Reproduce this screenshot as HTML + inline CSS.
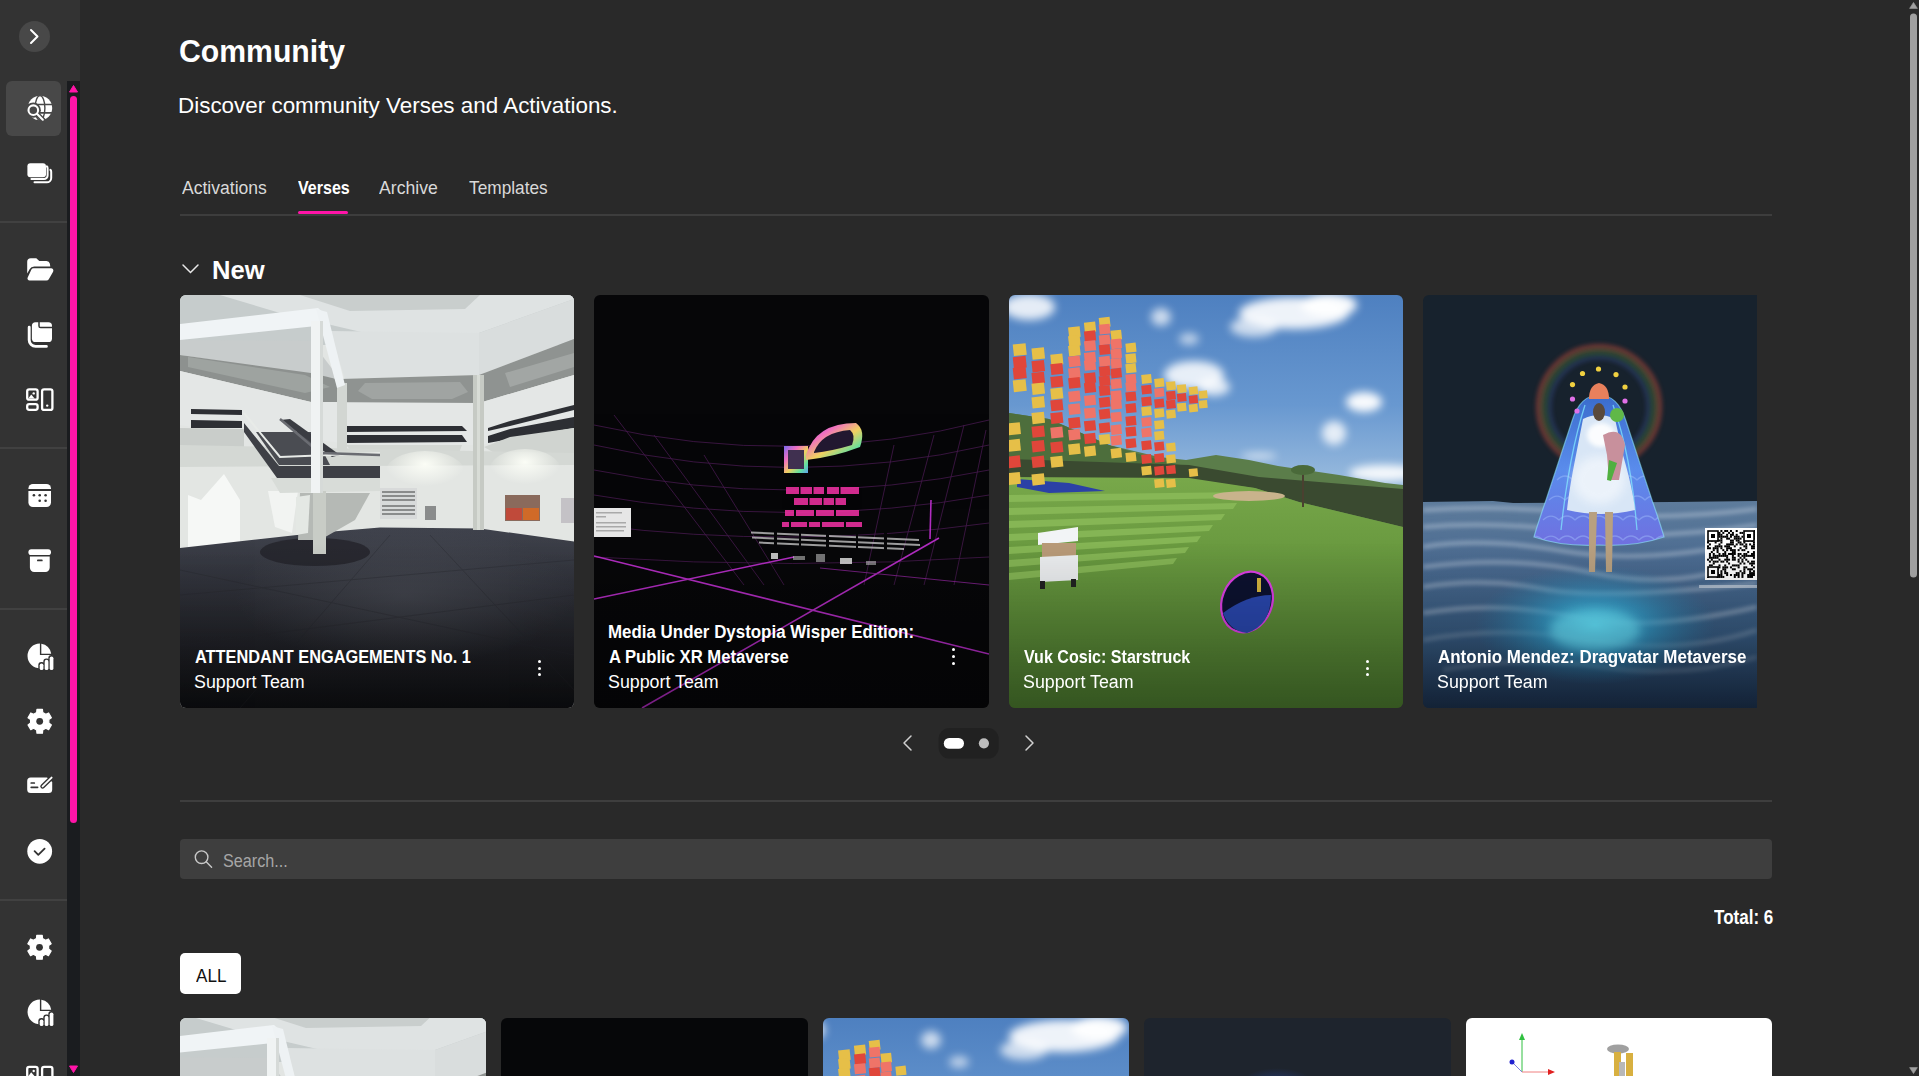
<!DOCTYPE html>
<html><head><meta charset="utf-8">
<style>
*{box-sizing:border-box;margin:0;padding:0}
html,body{width:1919px;height:1076px;overflow:hidden;background:#292929;font-family:"Liberation Sans",sans-serif;color:#fff}
.abs{position:absolute}
.tx{position:absolute;white-space:nowrap;line-height:normal;transform-origin:0 0;z-index:5}
#side{position:absolute;left:0;top:0;width:80px;height:1076px;background:#333}
#track{position:absolute;left:67px;top:81px;width:13px;height:995px;background:#1a1c1f}
.sep{position:absolute;left:0;width:67px;height:1px;background:#414141}
.card{position:absolute;top:295px;width:394px;height:413px;border-radius:6px;overflow:hidden}
.card svg{position:absolute;left:0;top:0}
.ov{position:absolute;left:0;top:0;width:100%;height:100%;background:linear-gradient(to bottom,rgba(0,0,0,0) 0%,rgba(0,0,0,0) 60%,rgba(0,0,0,0.15) 78%,rgba(0,0,0,0.32) 100%)}
.kebab{position:absolute;width:3px;height:17px;z-index:6}
.kebab i{display:block;width:3px;height:3px;border-radius:50%;background:#fff;margin-bottom:3.65px}
.gcard{position:absolute;top:1018px;width:306px;height:70px;border-radius:6px;overflow:hidden}
</style></head><body>
<div id="side">
  <div class="abs" style="left:19px;top:21px;width:31px;height:31px;border-radius:50%;background:#484848"></div>
  <svg class="abs" style="left:0;top:0" width="80" height="80"><path d="M31 30 L37.5 36.5 L31 43" fill="none" stroke="#fff" stroke-width="2" stroke-linecap="round" stroke-linejoin="round"/></svg>
  <div class="abs" style="left:6px;top:81px;width:55px;height:55px;border-radius:6px;background:#484848"></div>
  <div class="sep" style="top:221px;height:2px"></div>
  <div class="sep" style="top:447px;height:2px"></div>
  <div class="sep" style="top:608px;height:2px"></div>
  <div class="sep" style="top:899px;height:2px"></div>
  <div id="track">
    <svg class="abs" style="left:0;top:0" width="13" height="995">
      <path d="M2.5 11 L6.5 4.5 L10.5 11 Z" fill="#ff14a8" stroke="#ff14a8" stroke-width="1" stroke-linejoin="round"/>
      <rect x="3" y="15" width="7" height="727" rx="3.5" fill="#ff14a8"/>
      <path d="M2.5 985 L6.5 991.5 L10.5 985 Z" fill="#ff14a8" stroke="#ff14a8" stroke-width="1" stroke-linejoin="round"/>
    </svg>
  </div>
  <svg id="icons" class="abs" style="left:0;top:0" width="67" height="1076">
    <defs>
      <g id="ic-gear"><path d="M-3.03 -8.79 L-2.74 -11.89 L2.74 -11.89 L3.03 -8.79 L6.10 -7.02 L8.92 -8.32 L11.67 -3.57 L9.13 -1.77 L9.13 1.77 L11.67 3.57 L8.92 8.32 L6.10 7.02 L3.03 8.79 L2.74 11.89 L-2.74 11.89 L-3.03 8.79 L-6.10 7.02 L-8.92 8.32 L-11.67 3.57 L-9.13 1.77 L-9.13 -1.77 L-11.67 -3.57 L-8.92 -8.32 L-6.10 -7.02 Z" fill="#fff" stroke="#fff" stroke-width="1.2" stroke-linejoin="round"/><circle r="3.4" fill="#333"/></g>
      <g id="ic-pie">
        <path d="M39.9 643.6 V655.1 H52.3 A12.4 12.4 0 1 1 39.9 643.6 Z" fill="#fff"/>
        <path d="M41.3 643.7 A11.6 11.6 0 0 1 51.2 653.7 H41.3 Z" fill="#fff"/>
        <rect x="38.3" y="662.1" width="6.5" height="9.5" rx="3" fill="#333"/>
        <rect x="43.3" y="658.4" width="6.5" height="13.2" rx="3" fill="#333"/>
        <rect x="48.3" y="655" width="6.5" height="16.6" rx="3" fill="#333"/>
        <rect x="39.7" y="663.5" width="3.7" height="6.5" rx="1.85" fill="#fff"/>
        <rect x="44.7" y="659.8" width="3.7" height="10.2" rx="1.85" fill="#fff"/>
        <rect x="49.7" y="656.4" width="3.7" height="13.6" rx="1.85" fill="#fff"/>
      </g>
      <g id="ic-layout" fill="none" stroke="#fff" stroke-width="2.3">
        <rect x="27.2" y="389.3" width="10.4" height="10.4" rx="2"/>
        <rect x="27.2" y="404.1" width="10.4" height="5.7" rx="2"/>
        <rect x="42.1" y="389.3" width="10.3" height="20.6" rx="2"/>
        <path d="M28.3 398.6 L31.2 394.6 L34.6 398.6 Z" fill="#fff" stroke="none"/>
        <circle cx="33.7" cy="393.4" r="1.2" fill="#fff" stroke="none"/>
        <circle cx="47.2" cy="405.6" r="1.2" fill="#fff" stroke="none"/>
      </g>
    </defs>
    <!-- globe search -->
    <circle cx="40" cy="108" r="12.2" fill="#fff"/>
    <ellipse cx="40" cy="108" rx="4.9" ry="12.4" fill="none" stroke="#484848" stroke-width="1.4"/>
    <path d="M27 104.5 H53 M27 112.9 H53" stroke="#484848" stroke-width="1.6"/>
    <circle cx="33.3" cy="110.2" r="7.6" fill="#484848"/>
    <path d="M37.3 114.2 L43.5 120.4" stroke="#484848" stroke-width="5" stroke-linecap="round"/>
    <circle cx="33.3" cy="110.2" r="4.8" fill="none" stroke="#fff" stroke-width="2.1"/>
    <path d="M37.2 114.1 L42.8 119.7" stroke="#fff" stroke-width="2.1" stroke-linecap="round"/>
    <!-- chat stack -->
    <rect x="27.4" y="163.2" width="18.6" height="14.1" rx="3" fill="#fff"/>
    <path d="M31.4 179.1 H44 A3.6 3.6 0 0 0 47.6 175.5 V168.2 Q47.6 167 46.8 166.4" fill="none" stroke="#fff" stroke-width="2" stroke-linecap="round"/>
    <path d="M34.5 182.3 H46.8 A4.4 4.4 0 0 0 51.2 177.9 V171.7 Q51.2 170.5 50.4 169.9" fill="none" stroke="#fff" stroke-width="2" stroke-linecap="round"/>
    <!-- folder open -->
    <path d="M27.2 261.8 A3.6 3.6 0 0 1 30.8 258.2 H36.3 L39.3 260.9 H46.5 A3.4 3.4 0 0 1 49.8 263.6 L50.3 266.4 H34.2 A5.2 5.2 0 0 0 29.6 269.2 L27.2 273.5 Z" fill="#fff"/>
    <path d="M33.6 268.2 H51 A2.4 2.4 0 0 1 53.1 271.7 L48.8 279.2 A2.8 2.8 0 0 1 46.4 280.6 H29.6 A2.2 2.2 0 0 1 27.7 277.4 L31.4 269.5 A2.6 2.6 0 0 1 33.6 268.2 Z" fill="#fff"/>
    <!-- copy -->
    <path d="M29.2 327.3 V340 A6.4 6.4 0 0 0 35.6 346.4 H46.4" fill="none" stroke="#fff" stroke-width="2.9" stroke-linecap="round"/>
    <rect x="31.9" y="322.2" width="20.1" height="19.8" rx="3.6" fill="#fff"/>
    <path d="M39 322 V326 A1.6 1.6 0 0 0 40.6 327.6 H52.5" fill="none" stroke="#333" stroke-width="1.5"/>
    <!-- layout -->
    <use href="#ic-layout"/>
    <!-- calendar -->
    <path d="M28.4 489.1 V488.4 A4.5 4.5 0 0 1 32.9 483.9 H46.5 A4.5 4.5 0 0 1 51 488.4 V489.1 Z" fill="#fff"/>
    <path d="M28.4 491 H51 V502.5 A4.5 4.5 0 0 1 46.5 507 H32.9 A4.5 4.5 0 0 1 28.4 502.5 Z" fill="#fff"/>
    <g fill="#333"><circle cx="33.9" cy="495.3" r="1.3"/><circle cx="39.7" cy="495.3" r="1.3"/><circle cx="45.6" cy="495.3" r="1.3"/><circle cx="39.7" cy="500.7" r="1.3"/><circle cx="45.6" cy="500.7" r="1.3"/></g>
    <!-- archive -->
    <rect x="28.4" y="549.2" width="22.6" height="5.9" rx="2.9" fill="#fff"/>
    <path d="M29.9 556.6 H49.7 V567.6 A4.3 4.3 0 0 1 45.4 571.9 H34.2 A4.3 4.3 0 0 1 29.9 567.6 Z" fill="#fff"/>
    <rect x="37" y="559.5" width="5.7" height="1.8" rx="0.9" fill="#333"/>
    <!-- pie -->
    <use href="#ic-pie"/>
    <!-- gear -->
    <use href="#ic-gear" transform="translate(39.7 721.3)"/>
    <!-- ticket edit -->
    <path d="M30.7 777.5 H47 L52.2 782 V789.4 A3.5 3.5 0 0 1 48.7 792.9 H30.7 A3.5 3.5 0 0 1 27.2 789.4 V781 A3.5 3.5 0 0 1 30.7 777.5 Z" fill="#fff"/>
    <path d="M31.2 783 H34.3 M31.2 787.3 H37.6" stroke="#333" stroke-width="1.7" stroke-linecap="round"/>
    <path d="M42.6 786.4 L51.6 777.6" stroke="#333" stroke-width="4.6" stroke-linecap="round"/>
    <path d="M42.6 786.4 L51.6 777.6" stroke="#fff" stroke-width="1.9" stroke-linecap="round"/>
    <!-- check circle -->
    <circle cx="39.7" cy="851.3" r="12.4" fill="#fff"/>
    <path d="M34.6 851.2 L38.3 854.9 L44.6 848.6" fill="none" stroke="#333" stroke-width="1.8" stroke-linecap="round" stroke-linejoin="round"/>
    <!-- lower -->
    <use href="#ic-gear" transform="translate(39.5 947.3)"/>
    <use href="#ic-pie" transform="translate(0 356)"/>
    <use href="#ic-layout" transform="translate(0 677.6)"/>
  </svg>
</div>


<div class="abs" style="left:180px;top:214px;width:1592px;height:2px;background:#3d3d3d"></div>
<div class="abs" style="left:298px;top:211px;width:50px;height:3px;border-radius:2px;background:#ff14a8"></div>
<svg class="abs" style="left:180px;top:258px" width="24" height="24"><path d="M3 7 L10.5 14.5 L18 7" fill="none" stroke="#e8e8e8" stroke-width="1.5" stroke-linecap="round"/></svg>
<svg width="0" height="0" style="position:absolute">
<symbol id="im1" viewBox="0 0 394 413" preserveAspectRatio="none">
  <defs>
    <linearGradient id="fl1" x1="0" y1="0" x2="0" y2="1">
      <stop offset="0" stop-color="#3f424c"/><stop offset="0.35" stop-color="#30323a"/><stop offset="0.75" stop-color="#1c1d22"/><stop offset="1" stop-color="#0f1013"/>
    </linearGradient>
    <radialGradient id="flr1" cx="0.5" cy="0.5" r="0.5">
      <stop offset="0" stop-color="#50535c" stop-opacity="0.55"/><stop offset="1" stop-color="#50535c" stop-opacity="0"/>
    </radialGradient>
    <radialGradient id="spot1" cx="0.5" cy="0.3" r="0.5">
      <stop offset="0" stop-color="#fbfdf6" stop-opacity="1"/><stop offset="1" stop-color="#fbfdf6" stop-opacity="0"/>
    </radialGradient>
  </defs>
  <rect width="394" height="413" fill="#e2e5e3"/>
  <!-- top ceiling -->
  <rect width="394" height="50" fill="#c6cccc"/>
  <polygon points="40,0 394,0 394,4 299,38 194,40 100,18" fill="#dfe3e3"/>
  <polygon points="120,0 300,0 285,14 170,16" fill="#c9cecd"/>
  <!-- upper ring faces -->
  <polygon points="150,36 299,38 299,80 165,84" fill="#dde1e1"/>
  <polygon points="299,38 394,4 394,44 299,80" fill="#d9dddd"/>
  <polygon points="0,45 131,46 160,84 131,80 0,60" fill="#c8cccc"/>
  <!-- recesses -->
  <polygon points="0,60 131,78 165,86 165,107 131,107 0,76" fill="#8d918f"/>
  <polygon points="8,62 125,80 150,92 125,98 8,72" fill="#9ea3a0"/>
  <polygon points="160,84 299,80 299,108 165,108" fill="#8f9391"/>
  <polygon points="185,88 280,87 288,97 272,104 192,104 178,96" fill="#a0a4a2"/>
  <polygon points="299,80 394,44 394,80 299,108" fill="#8f9391"/>
  <polygon points="325,78 394,58 394,72 330,92" fill="#a2a6a4"/>
  <!-- upper walls -->
  <polygon points="0,76 131,107 299,108 394,80 394,135 299,150 194,150 60,140 0,130" fill="#e4e7e6"/>
  <!-- stripes -->
  <polygon points="11,114 62,115 62,120 11,119" fill="#2d2f34"/>
  <polygon points="11,125 62,126 62,133 11,133" fill="#2d2f34"/>
  <polygon points="166,131 282,131 287,136 166,137" fill="#2d2f34"/>
  <polygon points="166,140 282,140 287,147 166,148" fill="#2d2f34"/>
  <polygon points="308,133 330,126 394,110 394,115 330,131 308,136" fill="#2d2f34"/>
  <polygon points="308,141 330,134 394,122 394,133 330,144 308,148" fill="#2d2f34"/>
  <!-- ledges -->
  <polygon points="0,133 64,134 64,156 29,156 0,150" fill="#c9cdca"/>
  <polygon points="166,150 282,150 276,166 180,166" fill="#d2d6d2"/>
  <polygon points="304,152 330,142 394,133 394,160 325,164" fill="#d0d4d0"/>
  <polygon points="0,150 394,158 394,173 0,172" fill="#d4d8d4"/>
  <!-- lower walls -->
  <polygon points="0,172 394,170 394,248 300,234 200,232 135,238 0,253" fill="#e3e6e3"/>
  <ellipse cx="245" cy="178" rx="40" ry="22" fill="url(#spot1)"/>
  <ellipse cx="345" cy="176" rx="36" ry="22" fill="url(#spot1)"/>
  <polygon points="8,253 8,200 21,205 44,179 60,205 60,250" fill="#f6f8f6"/>
  <polygon points="88,196 118,196 112,238 95,232" fill="#f2f4f2"/>
  <!-- floor -->
  <polygon points="0,253 135,238 200,232.5 300,233.5 394,246.5 394,413 0,413" fill="url(#fl1)"/>
  <ellipse cx="225" cy="300" rx="170" ry="70" fill="url(#flr1)"/>
  <ellipse cx="135" cy="257" rx="55" ry="14" fill="#24252c" opacity="0.85"/>
  <g stroke="#25262c" stroke-width="1" opacity="0.35" fill="none">
    <path d="M0 300 L394 265"/><path d="M0 350 L394 300"/><path d="M60 413 L210 240"/><path d="M394 395 L250 240"/><path d="M0 275 L394 360"/>
  </g>
  <!-- right pillar -->
  <rect x="293" y="80" width="11" height="155" fill="#c6cac4"/>
  <rect x="297" y="80" width="3" height="155" fill="#d8dcd6"/>
  <!-- pillar center -->
  <rect x="157" y="88" width="10" height="68" fill="#d2d6d2"/>
  <!-- staircase -->
  <polygon points="64,128 99,171 200,171 200,183 97,183 64,137" fill="#3e4046"/>
  <polygon points="76,137 133,137 150,170 99,170" fill="#4a4c52"/>
  <polygon points="100,125 110,124 160,160 152,162" fill="#3a3c42"/>
  <path d="M64 118 L100 162 L200 158" stroke="#e8ebe8" stroke-width="2" fill="none"/>
  <path d="M100 124 L140 158 L200 160" stroke="#6a6c72" stroke-width="2.5" fill="none"/>
  <polygon points="91,183 200,183 200,196 100,198" fill="#d8dcd8"/>
  <polygon points="120,198 190,198 175,225 140,245 118,245" fill="#b5b9b5"/>
  <polygon points="116,202 130,200 128,238 116,240" fill="#e4e8e4"/>
  <rect x="133" y="196" width="13" height="63" fill="#c8ccc6"/>
  <!-- beam + pillar -->
  <polygon points="0,29 138,13 146,20 146,30 0,45" fill="#f0f4f6"/>
  <polygon points="136,14 147,17 165,90 157,93" fill="#eef2f4"/>
  <rect x="131" y="26" width="12" height="172" fill="#f0f3f3"/>
  <rect x="140" y="26" width="3" height="172" fill="#d6dad8"/>
  <!-- art -->
  <rect x="200" y="193" width="37" height="31" fill="#d8dada"/>
  <g fill="#6a6c6c" opacity="0.7"><rect x="202" y="196" width="33" height="2"/><rect x="202" y="200" width="33" height="2"/><rect x="202" y="204" width="33" height="2"/><rect x="202" y="210" width="33" height="2"/><rect x="202" y="214" width="33" height="2"/><rect x="202" y="218" width="33" height="2"/></g>
  <rect x="245" y="211" width="11" height="14" fill="#8a8c8c"/>
  <rect x="325" y="200" width="35" height="26" fill="#8a6a5c"/>
  <rect x="326" y="213" width="16" height="12" fill="#c04a3a"/>
  <rect x="343" y="213" width="16" height="12" fill="#d06a28"/>
  <rect x="381" y="203" width="13" height="25" fill="#c4c2c6"/>
</symbol>

<symbol id="im2" viewBox="0 0 395 413" preserveAspectRatio="none">
  <defs>
    <linearGradient id="rb2" x1="0" y1="0" x2="1" y2="1">
      <stop offset="0" stop-color="#7a6af0"/><stop offset="0.3" stop-color="#f070c0"/><stop offset="0.55" stop-color="#f0d060"/><stop offset="0.8" stop-color="#60e0a0"/><stop offset="1" stop-color="#60a0f0"/>
    </linearGradient>
  </defs>
  <rect width="395" height="413" fill="#060608"/>
  <g stroke="#7a2a86" stroke-width="0.8" fill="none" opacity="0.55">
    <path d="M0 130 Q200 175 395 125"/>
    <path d="M0 150 Q200 195 395 150"/>
    <path d="M0 175 Q200 215 395 175"/>
    <path d="M0 200 Q200 235 395 200"/>
    <path d="M0 230 Q200 255 395 228"/>
    <path d="M0 262 Q200 275 395 262"/>
    <path d="M20 120 L150 290"/><path d="M60 140 L170 290"/><path d="M110 160 L190 290"/>
    <path d="M300 150 L270 290"/><path d="M340 140 L300 290"/><path d="M370 130 L330 290"/><path d="M392 135 L360 290"/>
  </g>
  <g stroke="#b02cc0" stroke-width="1.6" fill="none">
    <path d="M0 261 L395 359"/>
    <path d="M48 413 L345 243"/>
    <path d="M0 304 L200 262"/>
    <path d="M337 205 L336 244"/>
  </g>
  <g stroke="#8a2496" stroke-width="1" fill="none" opacity="0.8">
    <path d="M226 273 L395 290"/>
  </g>
  <!-- logo -->
  <rect x="190" y="151" width="24" height="27" fill="url(#rb2)"/>
  <rect x="194" y="155" width="16" height="19" fill="#403050"/>
  <path d="M212 160 Q222 128 262 128 Q272 135 266 152 Q240 162 212 165 Z" fill="url(#rb2)"/>
  <path d="M220 157 Q228 137 256 135 Q262 140 258 150 Q238 156 220 158 Z" fill="#221830"/>
  <!-- magenta text -->
  <g fill="#e8309e" opacity="0.9">
    <rect x="192" y="192" width="73" height="7"/>
    <rect x="200" y="203" width="52" height="7"/>
    <rect x="191" y="215" width="74" height="6"/>
    <rect x="188" y="227" width="80" height="5"/>
  </g>
  <g fill="#060608">
    <rect x="205" y="192" width="1.5" height="7"/><rect x="218" y="192" width="1.5" height="7"/><rect x="230" y="192" width="3" height="7"/><rect x="245" y="192" width="1.5" height="7"/>
    <rect x="214" y="203" width="1.5" height="7"/><rect x="228" y="203" width="1.5" height="7"/><rect x="240" y="203" width="1.5" height="7"/>
    <rect x="200" y="215" width="2" height="6"/><rect x="220" y="215" width="2" height="6"/><rect x="240" y="215" width="2" height="6"/>
    <rect x="195" y="227" width="2" height="5"/><rect x="213" y="227" width="2" height="5"/><rect x="226" y="227" width="2" height="5"/><rect x="250" y="227" width="2" height="5"/>
  </g>
  <!-- white small text -->
  <g fill="#cfcfcf" opacity="0.75">
    <polygon points="157,236.5 325,244 325,246 157,238.5"/>
    <polygon points="158,241.5 326,249 326,251 158,243.5"/>
    <polygon points="165,246.5 310,253 310,255 165,248.5"/>
  </g>
  <g fill="#060608">
    <rect x="180" y="235" width="3" height="22"/><rect x="205" y="235" width="2" height="22"/><rect x="232" y="235" width="3" height="22"/><rect x="262" y="235" width="2" height="22"/><rect x="290" y="235" width="3" height="22"/>
  </g>
  <g fill="#e0e0e0" opacity="0.85">
    <rect x="177" y="258" width="7" height="6"/><rect x="199" y="261" width="12" height="4" opacity="0.6"/><rect x="222" y="259" width="9" height="8" opacity="0.6"/><rect x="246" y="263" width="12" height="6"/><rect x="272" y="266" width="10" height="4" opacity="0.6"/>
  </g>
  <!-- sign left -->
  <rect x="0" y="213" width="37" height="29" fill="#e6e6e6"/>
  <g fill="#909090" opacity="0.7"><rect x="2" y="217" width="26" height="1.5"/><rect x="2" y="221" width="10" height="1.5"/><rect x="2" y="227" width="30" height="1.5"/><rect x="2" y="231" width="30" height="1.5"/><rect x="2" y="235" width="28" height="1.5"/></g>
</symbol>

<symbol id="im3" viewBox="0 0 394 413" preserveAspectRatio="none">
  <defs>
    <linearGradient id="sky3" x1="0" y1="0" x2="0" y2="1">
      <stop offset="0" stop-color="#4e80c0"/><stop offset="0.55" stop-color="#6898d0"/><stop offset="1" stop-color="#a0c0e0"/>
    </linearGradient>
    <linearGradient id="gr3" x1="0" y1="0" x2="0" y2="1">
      <stop offset="0" stop-color="#78a84a"/><stop offset="0.3" stop-color="#6a9a40"/><stop offset="1" stop-color="#4e7e30"/>
    </linearGradient>
    <filter id="bl3" x="-30%" y="-30%" width="160%" height="160%"><feGaussianBlur stdDeviation="4"/></filter>
    <filter id="bl3b"><feGaussianBlur stdDeviation="1.2"/></filter>
  </defs>
  <rect width="394" height="200" fill="url(#sky3)"/>
  <g fill="#fff" filter="url(#bl3)">
    <ellipse cx="285" cy="18" rx="55" ry="16" opacity="0.9"/>
    <ellipse cx="320" cy="10" rx="28" ry="12" opacity="0.95"/>
    <ellipse cx="245" cy="32" rx="24" ry="10" opacity="0.7"/>
    <ellipse cx="185" cy="80" rx="30" ry="14" opacity="0.85"/>
    <ellipse cx="205" cy="92" rx="16" ry="9" opacity="0.8"/>
    <ellipse cx="152" cy="22" rx="10" ry="9" opacity="0.7"/>
    <ellipse cx="180" cy="44" rx="10" ry="6" opacity="0.6"/>
    <ellipse cx="355" cy="107" rx="18" ry="10" opacity="0.95"/>
    <ellipse cx="325" cy="138" rx="12" ry="12" opacity="0.8"/>
    <ellipse cx="20" cy="12" rx="26" ry="13" opacity="0.85"/>
    <ellipse cx="375" cy="178" rx="35" ry="8" opacity="0.9"/>
    <ellipse cx="250" cy="161" rx="18" ry="3" opacity="0.7"/>
  </g>
  <!-- hills -->
  <polygon points="0,118 40,124 100,150 150,162 177,165 207,160 240,165 269,171 330,180 376,188 394,190 394,232 0,232" fill="#5b7d4a"/>
  <polygon points="0,118 40,124 100,150 150,165 180,172 180,190 0,190" fill="#4d6e3c"/>
  <polygon points="0,164 180,170 250,182 394,194 394,232 290,207 246,193 180,185 0,184" fill="#3a4a30"/>
  <!-- grass -->
  <polygon points="0,182 180,183 246,193 290,207 394,232 394,413 0,413" fill="url(#gr3)"/>
  <g fill="#8cbc5a" opacity="0.8">
<polygon points="0,200 240,197 236,203 0,207"/>
<polygon points="0,213 228,208 224,214 0,220"/>
<polygon points="0,226 216,219 212,225 0,233"/>
<polygon points="0,239 204,230 200,236 0,246"/>
<polygon points="0,252 192,241 188,247 0,259"/>
<polygon points="0,265 180,252 176,258 0,272"/>
<polygon points="0,278 168,263 164,269 0,285"/>
</g>
  <polygon points="8,184 60,188 96,196 40,198 8,192" fill="#2b41a6"/>
  <ellipse cx="240" cy="201" rx="36" ry="5" fill="#c9b38c"/>
  <!-- palm -->
  <rect x="293" y="175" width="2" height="37" fill="#4a4030"/>
  <ellipse cx="294" cy="175" rx="12" ry="5" fill="#4a6a3a"/>
  <!-- squares -->
  <g>
<rect x="4.3" y="48.8" width="12.9" height="11.6" fill="#e6bf48" transform="rotate(-6 10.7 54.6)"/>
<rect x="4.3" y="61.5" width="12.9" height="11.6" fill="#e0463a" transform="rotate(-6 10.7 67.3)"/>
<rect x="4.3" y="72.2" width="12.9" height="11.6" fill="#e0463a" transform="rotate(-6 10.7 78.1)"/>
<rect x="4.3" y="84.9" width="12.9" height="11.6" fill="#e6bf48" transform="rotate(-6 10.7 90.7)"/>
<rect x="-1.7" y="127.8" width="13.1" height="11.8" fill="#e6bf48" transform="rotate(-6 4.9 133.7)"/>
<rect x="-1.7" y="144.4" width="13.1" height="11.8" fill="#e6bf48" transform="rotate(-6 4.9 150.3)"/>
<rect x="-1.7" y="161.0" width="13.1" height="11.8" fill="#e0463a" transform="rotate(-6 4.9 166.9)"/>
<rect x="-1.7" y="177.6" width="13.1" height="11.8" fill="#e6bf48" transform="rotate(-6 4.9 183.5)"/>
<rect x="23.0" y="52.9" width="12.5" height="11.2" fill="#e6bf48" transform="rotate(-6 29.3 58.5)"/>
<rect x="23.0" y="65.6" width="12.5" height="11.2" fill="#e0463a" transform="rotate(-6 29.3 71.2)"/>
<rect x="23.0" y="77.3" width="12.5" height="11.2" fill="#e0463a" transform="rotate(-6 29.3 82.9)"/>
<rect x="23.0" y="88.1" width="12.5" height="11.2" fill="#e6bf48" transform="rotate(-6 29.3 93.7)"/>
<rect x="23.0" y="101.7" width="12.5" height="11.2" fill="#e6bf48" transform="rotate(-6 29.3 107.3)"/>
<rect x="23.0" y="117.3" width="12.5" height="11.2" fill="#e6bf48" transform="rotate(-6 29.3 123.0)"/>
<rect x="23.0" y="131.0" width="12.5" height="11.2" fill="#e0463a" transform="rotate(-6 29.3 136.6)"/>
<rect x="23.0" y="145.6" width="12.5" height="11.2" fill="#e0463a" transform="rotate(-6 29.3 151.2)"/>
<rect x="23.0" y="161.2" width="12.5" height="11.2" fill="#e0463a" transform="rotate(-6 29.3 166.9)"/>
<rect x="23.0" y="178.8" width="12.5" height="11.2" fill="#e6bf48" transform="rotate(-6 29.3 184.4)"/>
<rect x="41.8" y="59.0" width="12.1" height="10.8" fill="#e6bf48" transform="rotate(-6 47.8 64.4)"/>
<rect x="41.8" y="68.7" width="12.1" height="10.8" fill="#e0463a" transform="rotate(-6 47.8 74.2)"/>
<rect x="41.8" y="81.4" width="12.1" height="10.8" fill="#e0463a" transform="rotate(-6 47.8 86.8)"/>
<rect x="41.8" y="93.1" width="12.1" height="10.8" fill="#e6bf48" transform="rotate(-6 47.8 98.6)"/>
<rect x="41.8" y="104.8" width="12.1" height="10.8" fill="#e0463a" transform="rotate(-6 47.8 110.3)"/>
<rect x="41.8" y="117.5" width="12.1" height="10.8" fill="#e0463a" transform="rotate(-6 47.8 123.0)"/>
<rect x="41.8" y="132.2" width="12.1" height="10.8" fill="#ef7468" transform="rotate(-6 47.8 137.6)"/>
<rect x="41.8" y="146.8" width="12.1" height="10.8" fill="#e0463a" transform="rotate(-6 47.8 152.2)"/>
<rect x="41.8" y="161.4" width="12.1" height="10.8" fill="#e6bf48" transform="rotate(-6 47.8 166.9)"/>
<rect x="59.6" y="31.8" width="11.6" height="10.5" fill="#e6bf48" transform="rotate(-6 65.4 37.1)"/>
<rect x="59.6" y="40.6" width="11.6" height="10.5" fill="#e6bf48" transform="rotate(-6 65.4 45.9)"/>
<rect x="59.6" y="50.4" width="11.6" height="10.5" fill="#e6bf48" transform="rotate(-6 65.4 55.6)"/>
<rect x="59.6" y="61.1" width="11.6" height="10.5" fill="#ef7468" transform="rotate(-6 65.4 66.4)"/>
<rect x="59.6" y="72.8" width="11.6" height="10.5" fill="#ef7468" transform="rotate(-6 65.4 78.1)"/>
<rect x="59.6" y="82.6" width="11.6" height="10.5" fill="#e0463a" transform="rotate(-6 65.4 87.8)"/>
<rect x="59.6" y="96.2" width="11.6" height="10.5" fill="#ef7468" transform="rotate(-6 65.4 101.5)"/>
<rect x="59.6" y="108.9" width="11.6" height="10.5" fill="#ef7468" transform="rotate(-6 65.4 114.2)"/>
<rect x="59.6" y="122.6" width="11.6" height="10.5" fill="#e0463a" transform="rotate(-6 65.4 127.8)"/>
<rect x="59.6" y="134.3" width="11.6" height="10.5" fill="#ef7468" transform="rotate(-6 65.4 139.5)"/>
<rect x="59.6" y="148.9" width="11.6" height="10.5" fill="#e6bf48" transform="rotate(-6 65.4 154.2)"/>
<rect x="75.4" y="27.1" width="11.3" height="10.1" fill="#e6bf48" transform="rotate(-6 81.0 32.2)"/>
<rect x="75.4" y="35.9" width="11.3" height="10.1" fill="#e0463a" transform="rotate(-6 81.0 41.0)"/>
<rect x="75.4" y="45.7" width="11.3" height="10.1" fill="#ef7468" transform="rotate(-6 81.0 50.7)"/>
<rect x="75.4" y="57.4" width="11.3" height="10.1" fill="#ef7468" transform="rotate(-6 81.0 62.5)"/>
<rect x="75.4" y="65.2" width="11.3" height="10.1" fill="#ef7468" transform="rotate(-6 81.0 70.3)"/>
<rect x="75.4" y="77.9" width="11.3" height="10.1" fill="#e0463a" transform="rotate(-6 81.0 82.9)"/>
<rect x="75.4" y="87.6" width="11.3" height="10.1" fill="#e0463a" transform="rotate(-6 81.0 92.7)"/>
<rect x="75.4" y="100.3" width="11.3" height="10.1" fill="#ef7468" transform="rotate(-6 81.0 105.4)"/>
<rect x="75.4" y="113.0" width="11.3" height="10.1" fill="#ef7468" transform="rotate(-6 81.0 118.1)"/>
<rect x="75.4" y="125.7" width="11.3" height="10.1" fill="#e0463a" transform="rotate(-6 81.0 130.8)"/>
<rect x="75.4" y="138.4" width="11.3" height="10.1" fill="#e0463a" transform="rotate(-6 81.0 143.4)"/>
<rect x="75.4" y="151.1" width="11.3" height="10.1" fill="#e6bf48" transform="rotate(-6 81.0 156.1)"/>
<rect x="90.2" y="22.4" width="10.9" height="9.8" fill="#e6bf48" transform="rotate(-6 95.6 27.3)"/>
<rect x="90.2" y="29.2" width="10.9" height="9.8" fill="#ef7468" transform="rotate(-6 95.6 34.2)"/>
<rect x="90.2" y="40.0" width="10.9" height="9.8" fill="#ef7468" transform="rotate(-6 95.6 44.9)"/>
<rect x="90.2" y="49.7" width="10.9" height="9.8" fill="#e0463a" transform="rotate(-6 95.6 54.6)"/>
<rect x="90.2" y="61.4" width="10.9" height="9.8" fill="#ef7468" transform="rotate(-6 95.6 66.4)"/>
<rect x="90.2" y="71.2" width="10.9" height="9.8" fill="#e0463a" transform="rotate(-6 95.6 76.1)"/>
<rect x="90.2" y="81.0" width="10.9" height="9.8" fill="#e0463a" transform="rotate(-6 95.6 85.9)"/>
<rect x="90.2" y="90.7" width="10.9" height="9.8" fill="#e0463a" transform="rotate(-6 95.6 95.6)"/>
<rect x="90.2" y="102.4" width="10.9" height="9.8" fill="#e0463a" transform="rotate(-6 95.6 107.3)"/>
<rect x="90.2" y="114.1" width="10.9" height="9.8" fill="#e0463a" transform="rotate(-6 95.6 119.0)"/>
<rect x="90.2" y="127.8" width="10.9" height="9.8" fill="#e0463a" transform="rotate(-6 95.6 132.7)"/>
<rect x="90.2" y="139.5" width="10.9" height="9.8" fill="#e6bf48" transform="rotate(-6 95.6 144.4)"/>
<rect x="102.0" y="35.2" width="10.6" height="9.6" fill="#e6bf48" transform="rotate(-6 107.3 40.0)"/>
<rect x="102.0" y="44.0" width="10.6" height="9.6" fill="#ef7468" transform="rotate(-6 107.3 48.8)"/>
<rect x="102.0" y="53.8" width="10.6" height="9.6" fill="#ef7468" transform="rotate(-6 107.3 58.5)"/>
<rect x="102.0" y="63.5" width="10.6" height="9.6" fill="#ef7468" transform="rotate(-6 107.3 68.3)"/>
<rect x="102.0" y="73.3" width="10.6" height="9.6" fill="#e0463a" transform="rotate(-6 107.3 78.1)"/>
<rect x="102.0" y="84.0" width="10.6" height="9.6" fill="#ef7468" transform="rotate(-6 107.3 88.8)"/>
<rect x="102.0" y="95.7" width="10.6" height="9.6" fill="#ef7468" transform="rotate(-6 107.3 100.5)"/>
<rect x="102.0" y="104.5" width="10.6" height="9.6" fill="#ef7468" transform="rotate(-6 107.3 109.3)"/>
<rect x="102.0" y="117.2" width="10.6" height="9.6" fill="#ef7468" transform="rotate(-6 107.3 122.0)"/>
<rect x="102.0" y="129.9" width="10.6" height="9.6" fill="#ef7468" transform="rotate(-6 107.3 134.7)"/>
<rect x="102.0" y="140.6" width="10.6" height="9.6" fill="#ef7468" transform="rotate(-6 107.3 145.4)"/>
<rect x="102.0" y="153.3" width="10.6" height="9.6" fill="#e6bf48" transform="rotate(-6 107.3 158.1)"/>
<rect x="116.8" y="48.1" width="10.3" height="9.2" fill="#e6bf48" transform="rotate(-6 122.0 52.7)"/>
<rect x="116.8" y="58.8" width="10.3" height="9.2" fill="#e6bf48" transform="rotate(-6 122.0 63.4)"/>
<rect x="116.8" y="68.6" width="10.3" height="9.2" fill="#e6bf48" transform="rotate(-6 122.0 73.2)"/>
<rect x="116.8" y="79.3" width="10.3" height="9.2" fill="#ef7468" transform="rotate(-6 122.0 83.9)"/>
<rect x="116.8" y="87.1" width="10.3" height="9.2" fill="#ef7468" transform="rotate(-6 122.0 91.7)"/>
<rect x="116.8" y="96.9" width="10.3" height="9.2" fill="#e0463a" transform="rotate(-6 122.0 101.5)"/>
<rect x="116.8" y="108.6" width="10.3" height="9.2" fill="#e0463a" transform="rotate(-6 122.0 113.2)"/>
<rect x="116.8" y="121.3" width="10.3" height="9.2" fill="#e0463a" transform="rotate(-6 122.0 125.9)"/>
<rect x="116.8" y="132.0" width="10.3" height="9.2" fill="#e0463a" transform="rotate(-6 122.0 136.6)"/>
<rect x="116.8" y="143.7" width="10.3" height="9.2" fill="#e0463a" transform="rotate(-6 122.0 148.3)"/>
<rect x="116.8" y="157.4" width="10.3" height="9.2" fill="#e6bf48" transform="rotate(-6 122.0 162.0)"/>
<rect x="132.6" y="79.5" width="9.9" height="8.9" fill="#e6bf48" transform="rotate(-6 137.6 83.9)"/>
<rect x="132.6" y="90.2" width="9.9" height="8.9" fill="#e0463a" transform="rotate(-6 137.6 94.7)"/>
<rect x="132.6" y="101.9" width="9.9" height="8.9" fill="#e0463a" transform="rotate(-6 137.6 106.4)"/>
<rect x="132.6" y="111.7" width="9.9" height="8.9" fill="#e6bf48" transform="rotate(-6 137.6 116.1)"/>
<rect x="132.6" y="122.4" width="9.9" height="8.9" fill="#ef7468" transform="rotate(-6 137.6 126.9)"/>
<rect x="132.6" y="133.1" width="9.9" height="8.9" fill="#ef7468" transform="rotate(-6 137.6 137.6)"/>
<rect x="132.6" y="145.8" width="9.9" height="8.9" fill="#e0463a" transform="rotate(-6 137.6 150.3)"/>
<rect x="132.6" y="159.5" width="9.9" height="8.9" fill="#e0463a" transform="rotate(-6 137.6 163.9)"/>
<rect x="132.6" y="171.2" width="9.9" height="8.9" fill="#e6bf48" transform="rotate(-6 137.6 175.6)"/>
<rect x="145.5" y="83.5" width="9.6" height="8.6" fill="#e6bf48" transform="rotate(-6 150.3 87.8)"/>
<rect x="145.5" y="93.3" width="9.6" height="8.6" fill="#ef7468" transform="rotate(-6 150.3 97.6)"/>
<rect x="145.5" y="104.0" width="9.6" height="8.6" fill="#e0463a" transform="rotate(-6 150.3 108.3)"/>
<rect x="145.5" y="113.8" width="9.6" height="8.6" fill="#e6bf48" transform="rotate(-6 150.3 118.1)"/>
<rect x="145.5" y="125.5" width="9.6" height="8.6" fill="#e6bf48" transform="rotate(-6 150.3 129.8)"/>
<rect x="145.5" y="136.2" width="9.6" height="8.6" fill="#e6bf48" transform="rotate(-6 150.3 140.5)"/>
<rect x="145.5" y="146.9" width="9.6" height="8.6" fill="#e0463a" transform="rotate(-6 150.3 151.2)"/>
<rect x="145.5" y="158.6" width="9.6" height="8.6" fill="#e0463a" transform="rotate(-6 150.3 163.0)"/>
<rect x="145.5" y="171.3" width="9.6" height="8.6" fill="#e0463a" transform="rotate(-6 150.3 175.6)"/>
<rect x="145.5" y="184.0" width="9.6" height="8.6" fill="#e6bf48" transform="rotate(-6 150.3 188.3)"/>
<rect x="157.3" y="86.6" width="9.3" height="8.4" fill="#e6bf48" transform="rotate(-6 162.0 90.7)"/>
<rect x="157.3" y="96.3" width="9.3" height="8.4" fill="#e0463a" transform="rotate(-6 162.0 100.5)"/>
<rect x="157.3" y="105.1" width="9.3" height="8.4" fill="#e0463a" transform="rotate(-6 162.0 109.3)"/>
<rect x="157.3" y="114.9" width="9.3" height="8.4" fill="#e6bf48" transform="rotate(-6 162.0 119.0)"/>
<rect x="157.3" y="148.0" width="9.3" height="8.4" fill="#e6bf48" transform="rotate(-6 162.0 152.2)"/>
<rect x="157.3" y="159.7" width="9.3" height="8.4" fill="#e6bf48" transform="rotate(-6 162.0 163.9)"/>
<rect x="157.3" y="170.5" width="9.3" height="8.4" fill="#e0463a" transform="rotate(-6 162.0 174.7)"/>
<rect x="157.3" y="184.1" width="9.3" height="8.4" fill="#e6bf48" transform="rotate(-6 162.0 188.3)"/>
<rect x="168.2" y="89.6" width="9.1" height="8.1" fill="#e6bf48" transform="rotate(-6 172.7 93.7)"/>
<rect x="168.2" y="98.4" width="9.1" height="8.1" fill="#e0463a" transform="rotate(-6 172.7 102.5)"/>
<rect x="168.2" y="108.1" width="9.1" height="8.1" fill="#e6bf48" transform="rotate(-6 172.7 112.2)"/>
<rect x="180.0" y="91.7" width="8.8" height="7.9" fill="#e6bf48" transform="rotate(-6 184.4 95.6)"/>
<rect x="180.0" y="100.5" width="8.8" height="7.9" fill="#e0463a" transform="rotate(-6 184.4 104.4)"/>
<rect x="180.0" y="109.2" width="8.8" height="7.9" fill="#e6bf48" transform="rotate(-6 184.4 113.2)"/>
<rect x="180.0" y="173.6" width="8.8" height="7.9" fill="#e6bf48" transform="rotate(-6 184.4 177.6)"/>
<rect x="189.9" y="95.7" width="8.5" height="7.7" fill="#e6bf48" transform="rotate(-6 194.2 99.5)"/>
<rect x="189.9" y="105.4" width="8.5" height="7.7" fill="#e6bf48" transform="rotate(-6 194.2 109.3)"/>
  </g>
  <!-- golf cart -->
  <polygon points="29,238 69,232 69,246 29,250" fill="#f2f4f6"/>
  <rect x="33" y="248" width="34" height="16" fill="#b89a78"/>
  <polygon points="31,262 69,260 69,285 31,287" fill="#eceef0"/>
  <rect x="31" y="286" width="5" height="8" fill="#222"/><rect x="62" y="284" width="5" height="8" fill="#222"/>
  <!-- portal -->
  <ellipse cx="238" cy="307" rx="25" ry="31" transform="rotate(22 238 307)" fill="#0d1230" stroke="#e040e8" stroke-width="2.2"/>
  <path d="M214 318 Q238 300 262 300 Q262 330 238 338 Q220 336 214 318 Z" fill="#2a48b0"/>
  <rect x="248" y="283" width="4" height="14" fill="#d8b840"/>
  <!-- bottom dark -->
  
</symbol>
<symbol id="im4" viewBox="0 0 334 413" preserveAspectRatio="none">
  <defs>
    <linearGradient id="cl4" x1="0" y1="0" x2="0" y2="1">
      <stop offset="0" stop-color="#5e7c9c"/><stop offset="0.3" stop-color="#4a6a90"/><stop offset="0.65" stop-color="#365a80"/><stop offset="1" stop-color="#1c3250"/>
    </linearGradient>
    <radialGradient id="glow4" cx="0.5" cy="0.5" r="0.5">
      <stop offset="0" stop-color="#50e0ff" stop-opacity="1"/><stop offset="0.45" stop-color="#30b0e0" stop-opacity="0.6"/><stop offset="1" stop-color="#2080b0" stop-opacity="0"/>
    </radialGradient>
    <linearGradient id="cape4" x1="0" y1="0" x2="0" y2="1">
      <stop offset="0" stop-color="#3a6ccc"/><stop offset="0.5" stop-color="#5a8cec"/><stop offset="1" stop-color="#7070e0"/>
    </linearGradient>
    <clipPath id="capeclip"><path d="M176 100 Q157 100 149 126 Q136 166 123 205 Q113 234 111 242 Q140 252 176 250 Q212 252 241 242 Q239 234 229 205 Q216 166 203 126 Q195 100 176 100 Z"/></clipPath>
    <filter id="bl4"><feGaussianBlur stdDeviation="2"/></filter>
    <filter id="bl4b" x="-20%" y="-20%" width="140%" height="140%"><feGaussianBlur stdDeviation="5"/></filter>
  </defs>
  <rect width="334" height="413" fill="#17222d"/>
  <polygon points="0,207 70,206 90,208 250,207 334,206 334,413 0,413" fill="url(#cl4)"/>
  <g stroke="#c4d0e0" stroke-width="4" opacity="0.5" filter="url(#bl4)" fill="none">
    <path d="M0 215 Q80 210 160 218 T334 214"/>
    <path d="M0 232 Q70 226 150 236 T334 230"/>
    <path d="M0 252 Q60 242 140 256 T334 246"/>
    <path d="M0 272 Q90 260 170 278 T334 266"/>
    <path d="M0 292 Q60 282 120 294 T334 288"/>
    <path d="M0 318 Q80 306 150 322 T334 312"/>
    <path d="M0 345 Q80 330 170 345 T334 335" opacity="0.6"/>
    <path d="M20 375 Q100 360 180 372 T334 362" opacity="0.5"/>
  </g>
  <ellipse cx="172" cy="330" rx="120" ry="60" fill="url(#glow4)"/>
  <ellipse cx="172" cy="335" rx="45" ry="20" fill="#70e8ff" opacity="0.6" filter="url(#bl4b)"/>
  <!-- halo -->
  <circle cx="176" cy="112" r="61" fill="none" stroke="#c04a3a" stroke-width="4" opacity="0.55" filter="url(#bl4)"/>
  <circle cx="176" cy="112" r="57" fill="none" stroke="#c0a040" stroke-width="3" opacity="0.4" filter="url(#bl4)"/>
  <circle cx="176" cy="112" r="53" fill="none" stroke="#4a9a50" stroke-width="3" opacity="0.4" filter="url(#bl4)"/>
  <circle cx="176" cy="112" r="49" fill="none" stroke="#4a60c0" stroke-width="3" opacity="0.35" filter="url(#bl4)"/>
  <!-- cape -->
  <path d="M176 100 Q157 100 149 126 Q136 166 123 205 Q113 234 111 242 Q140 252 176 250 Q212 252 241 242 Q239 234 229 205 Q216 166 203 126 Q195 100 176 100 Z" fill="url(#cape4)"/>
  <path d="M176 100 Q157 100 149 126 Q136 166 123 205 Q113 234 111 242 Q140 252 176 250 Q212 252 241 242 Q239 234 229 205 Q216 166 203 126 Q195 100 176 100 Z" fill="none" stroke="#90f0ff" stroke-width="1.2" opacity="0.55"/>
  <path d="M162 110 Q146 160 138 235 M190 110 Q208 160 214 235" stroke="#80e8ff" stroke-width="1.3" fill="none" opacity="0.75"/>
  <g fill="none" stroke="#a8c8ff" stroke-width="1.2" opacity="0.4" clip-path="url(#capeclip)">
    <path d="M120 225 q8 -8 16 0 q8 -8 16 0 q8 -8 16 0 q8 -8 16 0 q8 -8 16 0 q8 -8 16 0 q8 -8 16 0 q8 -8 16 0"/>
    <path d="M126 205 q8 -8 16 0 q8 -8 16 0 q8 -8 16 0 q8 -8 16 0 q8 -8 16 0 q8 -8 16 0 q8 -8 16 0"/>
    <path d="M104 245 q8 -8 16 0 q8 -8 16 0 q8 -8 16 0 q8 -8 16 0 q8 -8 16 0 q8 -8 16 0 q8 -8 16 0 q8 -8 16 0 q8 -8 16 0"/><path d="M134 185 q8 -8 16 0 q8 -8 16 0 q8 -8 16 0 q8 -8 16 0 q8 -8 16 0 q8 -8 16 0"/>
  </g>
  <!-- dress -->
  <path d="M160 124 Q176 116 192 124 L200 160 Q210 195 212 215 Q178 223 144 215 Q146 195 153 160 Z" fill="#d8e6f6"/>
  <ellipse cx="176" cy="185" rx="26" ry="24" fill="#ffffff" opacity="0.5" filter="url(#bl4b)"/>
  <ellipse cx="178" cy="140" rx="14" ry="12" fill="#ffffff" opacity="0.9" filter="url(#bl4)"/>
  <path d="M166 217 L174 217 L172 277 L166 277 Z" fill="#b8a080"/>
  <path d="M182 217 L190 217 L189 277 L183 277 Z" fill="#b8a080"/>
  <path d="M180 140 Q198 130 202 150 L196 185 L186 185 L184 160 Z" fill="#c8909c"/>
  <circle cx="194" cy="120" r="7" fill="#60b848"/>
  <path d="M186 165 L194 168 L188 186 L184 185 Z" fill="#50b040"/>
  <ellipse cx="176" cy="117" rx="6" ry="9" fill="#5a4a3c"/>
  <path d="M166 104 Q166 90 176 88 Q186 90 186 104 Z" fill="#e8805c"/>
  <g fill="#f0d040">
    <circle cx="159.5" cy="78.5" r="2.6"/><circle cx="175.5" cy="74" r="2.6"/><circle cx="193" cy="79.6" r="2.6"/><circle cx="149.5" cy="89.6" r="2.6"/><circle cx="202" cy="92" r="2.6"/>
  </g>
  <g fill="#e070e8"><circle cx="149.5" cy="104" r="2.6"/><circle cx="202" cy="106" r="2.6"/><circle cx="154" cy="116" r="2.6"/></g>
  <!-- QR -->
  <rect x="282" y="233" width="52" height="52" fill="#fff"/>
  <g fill="#000"><rect x="284.00" y="235.00" width="2.01" height="2.01"/>
<rect x="284.00" y="238.83" width="2.01" height="2.01"/>
<rect x="284.00" y="244.57" width="2.01" height="2.01"/>
<rect x="284.00" y="246.48" width="2.01" height="2.01"/>
<rect x="284.00" y="250.31" width="2.01" height="2.01"/>
<rect x="284.00" y="252.22" width="2.01" height="2.01"/>
<rect x="284.00" y="263.70" width="2.01" height="2.01"/>
<rect x="284.00" y="275.19" width="2.01" height="2.01"/>
<rect x="284.00" y="280.93" width="2.01" height="2.01"/>
<rect x="285.91" y="235.00" width="2.01" height="2.01"/>
<rect x="285.91" y="248.40" width="2.01" height="2.01"/>
<rect x="285.91" y="252.22" width="2.01" height="2.01"/>
<rect x="285.91" y="257.96" width="2.01" height="2.01"/>
<rect x="285.91" y="259.88" width="2.01" height="2.01"/>
<rect x="285.91" y="261.79" width="2.01" height="2.01"/>
<rect x="285.91" y="265.62" width="2.01" height="2.01"/>
<rect x="285.91" y="269.44" width="2.01" height="2.01"/>
<rect x="285.91" y="273.27" width="2.01" height="2.01"/>
<rect x="285.91" y="275.19" width="2.01" height="2.01"/>
<rect x="287.83" y="244.57" width="2.01" height="2.01"/>
<rect x="287.83" y="256.05" width="2.01" height="2.01"/>
<rect x="287.83" y="261.79" width="2.01" height="2.01"/>
<rect x="287.83" y="263.70" width="2.01" height="2.01"/>
<rect x="287.83" y="269.44" width="2.01" height="2.01"/>
<rect x="287.83" y="273.27" width="2.01" height="2.01"/>
<rect x="287.83" y="275.19" width="2.01" height="2.01"/>
<rect x="287.83" y="277.10" width="2.01" height="2.01"/>
<rect x="289.74" y="235.00" width="2.01" height="2.01"/>
<rect x="289.74" y="238.83" width="2.01" height="2.01"/>
<rect x="289.74" y="242.65" width="2.01" height="2.01"/>
<rect x="289.74" y="252.22" width="2.01" height="2.01"/>
<rect x="289.74" y="254.14" width="2.01" height="2.01"/>
<rect x="289.74" y="257.96" width="2.01" height="2.01"/>
<rect x="289.74" y="259.88" width="2.01" height="2.01"/>
<rect x="289.74" y="261.79" width="2.01" height="2.01"/>
<rect x="289.74" y="265.62" width="2.01" height="2.01"/>
<rect x="289.74" y="267.53" width="2.01" height="2.01"/>
<rect x="289.74" y="271.36" width="2.01" height="2.01"/>
<rect x="289.74" y="277.10" width="2.01" height="2.01"/>
<rect x="291.65" y="246.48" width="2.01" height="2.01"/>
<rect x="291.65" y="250.31" width="2.01" height="2.01"/>
<rect x="291.65" y="252.22" width="2.01" height="2.01"/>
<rect x="291.65" y="259.88" width="2.01" height="2.01"/>
<rect x="291.65" y="261.79" width="2.01" height="2.01"/>
<rect x="291.65" y="265.62" width="2.01" height="2.01"/>
<rect x="291.65" y="271.36" width="2.01" height="2.01"/>
<rect x="291.65" y="279.01" width="2.01" height="2.01"/>
<rect x="293.57" y="236.91" width="2.01" height="2.01"/>
<rect x="293.57" y="238.83" width="2.01" height="2.01"/>
<rect x="293.57" y="244.57" width="2.01" height="2.01"/>
<rect x="293.57" y="250.31" width="2.01" height="2.01"/>
<rect x="293.57" y="252.22" width="2.01" height="2.01"/>
<rect x="293.57" y="254.14" width="2.01" height="2.01"/>
<rect x="293.57" y="256.05" width="2.01" height="2.01"/>
<rect x="293.57" y="259.88" width="2.01" height="2.01"/>
<rect x="293.57" y="261.79" width="2.01" height="2.01"/>
<rect x="293.57" y="265.62" width="2.01" height="2.01"/>
<rect x="293.57" y="271.36" width="2.01" height="2.01"/>
<rect x="293.57" y="273.27" width="2.01" height="2.01"/>
<rect x="293.57" y="277.10" width="2.01" height="2.01"/>
<rect x="293.57" y="279.01" width="2.01" height="2.01"/>
<rect x="293.57" y="280.93" width="2.01" height="2.01"/>
<rect x="295.48" y="236.91" width="2.01" height="2.01"/>
<rect x="295.48" y="238.83" width="2.01" height="2.01"/>
<rect x="295.48" y="240.74" width="2.01" height="2.01"/>
<rect x="295.48" y="244.57" width="2.01" height="2.01"/>
<rect x="295.48" y="248.40" width="2.01" height="2.01"/>
<rect x="295.48" y="250.31" width="2.01" height="2.01"/>
<rect x="295.48" y="257.96" width="2.01" height="2.01"/>
<rect x="295.48" y="259.88" width="2.01" height="2.01"/>
<rect x="295.48" y="263.70" width="2.01" height="2.01"/>
<rect x="295.48" y="269.44" width="2.01" height="2.01"/>
<rect x="295.48" y="271.36" width="2.01" height="2.01"/>
<rect x="295.48" y="279.01" width="2.01" height="2.01"/>
<rect x="295.48" y="280.93" width="2.01" height="2.01"/>
<rect x="297.40" y="235.00" width="2.01" height="2.01"/>
<rect x="297.40" y="238.83" width="2.01" height="2.01"/>
<rect x="297.40" y="240.74" width="2.01" height="2.01"/>
<rect x="297.40" y="242.65" width="2.01" height="2.01"/>
<rect x="297.40" y="244.57" width="2.01" height="2.01"/>
<rect x="297.40" y="246.48" width="2.01" height="2.01"/>
<rect x="297.40" y="250.31" width="2.01" height="2.01"/>
<rect x="297.40" y="252.22" width="2.01" height="2.01"/>
<rect x="297.40" y="259.88" width="2.01" height="2.01"/>
<rect x="297.40" y="265.62" width="2.01" height="2.01"/>
<rect x="297.40" y="275.19" width="2.01" height="2.01"/>
<rect x="297.40" y="277.10" width="2.01" height="2.01"/>
<rect x="297.40" y="279.01" width="2.01" height="2.01"/>
<rect x="297.40" y="280.93" width="2.01" height="2.01"/>
<rect x="299.31" y="236.91" width="2.01" height="2.01"/>
<rect x="299.31" y="240.74" width="2.01" height="2.01"/>
<rect x="299.31" y="254.14" width="2.01" height="2.01"/>
<rect x="299.31" y="257.96" width="2.01" height="2.01"/>
<rect x="299.31" y="259.88" width="2.01" height="2.01"/>
<rect x="299.31" y="265.62" width="2.01" height="2.01"/>
<rect x="299.31" y="271.36" width="2.01" height="2.01"/>
<rect x="299.31" y="273.27" width="2.01" height="2.01"/>
<rect x="299.31" y="280.93" width="2.01" height="2.01"/>
<rect x="301.22" y="235.00" width="2.01" height="2.01"/>
<rect x="301.22" y="240.74" width="2.01" height="2.01"/>
<rect x="301.22" y="250.31" width="2.01" height="2.01"/>
<rect x="301.22" y="256.05" width="2.01" height="2.01"/>
<rect x="301.22" y="257.96" width="2.01" height="2.01"/>
<rect x="301.22" y="259.88" width="2.01" height="2.01"/>
<rect x="301.22" y="263.70" width="2.01" height="2.01"/>
<rect x="301.22" y="269.44" width="2.01" height="2.01"/>
<rect x="301.22" y="271.36" width="2.01" height="2.01"/>
<rect x="301.22" y="273.27" width="2.01" height="2.01"/>
<rect x="301.22" y="275.19" width="2.01" height="2.01"/>
<rect x="301.22" y="277.10" width="2.01" height="2.01"/>
<rect x="303.14" y="235.00" width="2.01" height="2.01"/>
<rect x="303.14" y="238.83" width="2.01" height="2.01"/>
<rect x="303.14" y="240.74" width="2.01" height="2.01"/>
<rect x="303.14" y="242.65" width="2.01" height="2.01"/>
<rect x="303.14" y="248.40" width="2.01" height="2.01"/>
<rect x="303.14" y="250.31" width="2.01" height="2.01"/>
<rect x="303.14" y="252.22" width="2.01" height="2.01"/>
<rect x="303.14" y="254.14" width="2.01" height="2.01"/>
<rect x="303.14" y="259.88" width="2.01" height="2.01"/>
<rect x="303.14" y="261.79" width="2.01" height="2.01"/>
<rect x="303.14" y="263.70" width="2.01" height="2.01"/>
<rect x="303.14" y="265.62" width="2.01" height="2.01"/>
<rect x="303.14" y="271.36" width="2.01" height="2.01"/>
<rect x="303.14" y="277.10" width="2.01" height="2.01"/>
<rect x="303.14" y="279.01" width="2.01" height="2.01"/>
<rect x="305.05" y="236.91" width="2.01" height="2.01"/>
<rect x="305.05" y="242.65" width="2.01" height="2.01"/>
<rect x="305.05" y="248.40" width="2.01" height="2.01"/>
<rect x="305.05" y="250.31" width="2.01" height="2.01"/>
<rect x="305.05" y="252.22" width="2.01" height="2.01"/>
<rect x="305.05" y="257.96" width="2.01" height="2.01"/>
<rect x="305.05" y="263.70" width="2.01" height="2.01"/>
<rect x="305.05" y="267.53" width="2.01" height="2.01"/>
<rect x="306.96" y="235.00" width="2.01" height="2.01"/>
<rect x="306.96" y="238.83" width="2.01" height="2.01"/>
<rect x="306.96" y="240.74" width="2.01" height="2.01"/>
<rect x="306.96" y="244.57" width="2.01" height="2.01"/>
<rect x="306.96" y="246.48" width="2.01" height="2.01"/>
<rect x="306.96" y="248.40" width="2.01" height="2.01"/>
<rect x="306.96" y="252.22" width="2.01" height="2.01"/>
<rect x="306.96" y="254.14" width="2.01" height="2.01"/>
<rect x="306.96" y="257.96" width="2.01" height="2.01"/>
<rect x="306.96" y="271.36" width="2.01" height="2.01"/>
<rect x="306.96" y="279.01" width="2.01" height="2.01"/>
<rect x="308.88" y="236.91" width="2.01" height="2.01"/>
<rect x="308.88" y="238.83" width="2.01" height="2.01"/>
<rect x="308.88" y="244.57" width="2.01" height="2.01"/>
<rect x="308.88" y="246.48" width="2.01" height="2.01"/>
<rect x="308.88" y="248.40" width="2.01" height="2.01"/>
<rect x="308.88" y="254.14" width="2.01" height="2.01"/>
<rect x="308.88" y="256.05" width="2.01" height="2.01"/>
<rect x="308.88" y="257.96" width="2.01" height="2.01"/>
<rect x="308.88" y="259.88" width="2.01" height="2.01"/>
<rect x="308.88" y="261.79" width="2.01" height="2.01"/>
<rect x="308.88" y="263.70" width="2.01" height="2.01"/>
<rect x="308.88" y="269.44" width="2.01" height="2.01"/>
<rect x="308.88" y="273.27" width="2.01" height="2.01"/>
<rect x="310.79" y="240.74" width="2.01" height="2.01"/>
<rect x="310.79" y="242.65" width="2.01" height="2.01"/>
<rect x="310.79" y="250.31" width="2.01" height="2.01"/>
<rect x="310.79" y="254.14" width="2.01" height="2.01"/>
<rect x="310.79" y="256.05" width="2.01" height="2.01"/>
<rect x="310.79" y="257.96" width="2.01" height="2.01"/>
<rect x="310.79" y="261.79" width="2.01" height="2.01"/>
<rect x="310.79" y="263.70" width="2.01" height="2.01"/>
<rect x="310.79" y="269.44" width="2.01" height="2.01"/>
<rect x="310.79" y="273.27" width="2.01" height="2.01"/>
<rect x="310.79" y="279.01" width="2.01" height="2.01"/>
<rect x="310.79" y="280.93" width="2.01" height="2.01"/>
<rect x="312.70" y="235.00" width="2.01" height="2.01"/>
<rect x="312.70" y="238.83" width="2.01" height="2.01"/>
<rect x="312.70" y="240.74" width="2.01" height="2.01"/>
<rect x="312.70" y="242.65" width="2.01" height="2.01"/>
<rect x="312.70" y="244.57" width="2.01" height="2.01"/>
<rect x="312.70" y="248.40" width="2.01" height="2.01"/>
<rect x="312.70" y="269.44" width="2.01" height="2.01"/>
<rect x="312.70" y="277.10" width="2.01" height="2.01"/>
<rect x="312.70" y="279.01" width="2.01" height="2.01"/>
<rect x="314.62" y="240.74" width="2.01" height="2.01"/>
<rect x="314.62" y="242.65" width="2.01" height="2.01"/>
<rect x="314.62" y="244.57" width="2.01" height="2.01"/>
<rect x="314.62" y="246.48" width="2.01" height="2.01"/>
<rect x="314.62" y="254.14" width="2.01" height="2.01"/>
<rect x="314.62" y="257.96" width="2.01" height="2.01"/>
<rect x="314.62" y="259.88" width="2.01" height="2.01"/>
<rect x="314.62" y="263.70" width="2.01" height="2.01"/>
<rect x="314.62" y="265.62" width="2.01" height="2.01"/>
<rect x="314.62" y="269.44" width="2.01" height="2.01"/>
<rect x="314.62" y="271.36" width="2.01" height="2.01"/>
<rect x="314.62" y="277.10" width="2.01" height="2.01"/>
<rect x="314.62" y="279.01" width="2.01" height="2.01"/>
<rect x="314.62" y="280.93" width="2.01" height="2.01"/>
<rect x="316.53" y="236.91" width="2.01" height="2.01"/>
<rect x="316.53" y="242.65" width="2.01" height="2.01"/>
<rect x="316.53" y="246.48" width="2.01" height="2.01"/>
<rect x="316.53" y="248.40" width="2.01" height="2.01"/>
<rect x="316.53" y="252.22" width="2.01" height="2.01"/>
<rect x="316.53" y="257.96" width="2.01" height="2.01"/>
<rect x="316.53" y="261.79" width="2.01" height="2.01"/>
<rect x="316.53" y="267.53" width="2.01" height="2.01"/>
<rect x="316.53" y="275.19" width="2.01" height="2.01"/>
<rect x="318.44" y="236.91" width="2.01" height="2.01"/>
<rect x="318.44" y="240.74" width="2.01" height="2.01"/>
<rect x="318.44" y="248.40" width="2.01" height="2.01"/>
<rect x="318.44" y="254.14" width="2.01" height="2.01"/>
<rect x="318.44" y="259.88" width="2.01" height="2.01"/>
<rect x="318.44" y="263.70" width="2.01" height="2.01"/>
<rect x="318.44" y="265.62" width="2.01" height="2.01"/>
<rect x="318.44" y="277.10" width="2.01" height="2.01"/>
<rect x="318.44" y="279.01" width="2.01" height="2.01"/>
<rect x="318.44" y="280.93" width="2.01" height="2.01"/>
<rect x="320.36" y="242.65" width="2.01" height="2.01"/>
<rect x="320.36" y="244.57" width="2.01" height="2.01"/>
<rect x="320.36" y="246.48" width="2.01" height="2.01"/>
<rect x="320.36" y="250.31" width="2.01" height="2.01"/>
<rect x="320.36" y="254.14" width="2.01" height="2.01"/>
<rect x="320.36" y="257.96" width="2.01" height="2.01"/>
<rect x="320.36" y="259.88" width="2.01" height="2.01"/>
<rect x="320.36" y="261.79" width="2.01" height="2.01"/>
<rect x="320.36" y="267.53" width="2.01" height="2.01"/>
<rect x="320.36" y="271.36" width="2.01" height="2.01"/>
<rect x="320.36" y="273.27" width="2.01" height="2.01"/>
<rect x="320.36" y="275.19" width="2.01" height="2.01"/>
<rect x="320.36" y="277.10" width="2.01" height="2.01"/>
<rect x="322.27" y="235.00" width="2.01" height="2.01"/>
<rect x="322.27" y="236.91" width="2.01" height="2.01"/>
<rect x="322.27" y="238.83" width="2.01" height="2.01"/>
<rect x="322.27" y="248.40" width="2.01" height="2.01"/>
<rect x="322.27" y="250.31" width="2.01" height="2.01"/>
<rect x="322.27" y="252.22" width="2.01" height="2.01"/>
<rect x="322.27" y="257.96" width="2.01" height="2.01"/>
<rect x="322.27" y="259.88" width="2.01" height="2.01"/>
<rect x="322.27" y="263.70" width="2.01" height="2.01"/>
<rect x="322.27" y="271.36" width="2.01" height="2.01"/>
<rect x="324.19" y="235.00" width="2.01" height="2.01"/>
<rect x="324.19" y="244.57" width="2.01" height="2.01"/>
<rect x="324.19" y="256.05" width="2.01" height="2.01"/>
<rect x="324.19" y="259.88" width="2.01" height="2.01"/>
<rect x="324.19" y="265.62" width="2.01" height="2.01"/>
<rect x="324.19" y="273.27" width="2.01" height="2.01"/>
<rect x="324.19" y="279.01" width="2.01" height="2.01"/>
<rect x="324.19" y="280.93" width="2.01" height="2.01"/>
<rect x="326.10" y="235.00" width="2.01" height="2.01"/>
<rect x="326.10" y="236.91" width="2.01" height="2.01"/>
<rect x="326.10" y="242.65" width="2.01" height="2.01"/>
<rect x="326.10" y="248.40" width="2.01" height="2.01"/>
<rect x="326.10" y="259.88" width="2.01" height="2.01"/>
<rect x="326.10" y="267.53" width="2.01" height="2.01"/>
<rect x="326.10" y="273.27" width="2.01" height="2.01"/>
<rect x="326.10" y="275.19" width="2.01" height="2.01"/>
<rect x="326.10" y="277.10" width="2.01" height="2.01"/>
<rect x="326.10" y="279.01" width="2.01" height="2.01"/>
<rect x="326.10" y="280.93" width="2.01" height="2.01"/>
<rect x="328.01" y="240.74" width="2.01" height="2.01"/>
<rect x="328.01" y="244.57" width="2.01" height="2.01"/>
<rect x="328.01" y="250.31" width="2.01" height="2.01"/>
<rect x="328.01" y="252.22" width="2.01" height="2.01"/>
<rect x="328.01" y="257.96" width="2.01" height="2.01"/>
<rect x="328.01" y="259.88" width="2.01" height="2.01"/>
<rect x="328.01" y="265.62" width="2.01" height="2.01"/>
<rect x="328.01" y="267.53" width="2.01" height="2.01"/>
<rect x="328.01" y="269.44" width="2.01" height="2.01"/>
<rect x="328.01" y="273.27" width="2.01" height="2.01"/>
<rect x="328.01" y="277.10" width="2.01" height="2.01"/>
<rect x="328.01" y="279.01" width="2.01" height="2.01"/>
<rect x="328.01" y="280.93" width="2.01" height="2.01"/>
<rect x="329.93" y="235.00" width="2.01" height="2.01"/>
<rect x="329.93" y="236.91" width="2.01" height="2.01"/>
<rect x="329.93" y="238.83" width="2.01" height="2.01"/>
<rect x="329.93" y="240.74" width="2.01" height="2.01"/>
<rect x="329.93" y="242.65" width="2.01" height="2.01"/>
<rect x="329.93" y="246.48" width="2.01" height="2.01"/>
<rect x="329.93" y="248.40" width="2.01" height="2.01"/>
<rect x="329.93" y="250.31" width="2.01" height="2.01"/>
<rect x="329.93" y="252.22" width="2.01" height="2.01"/>
<rect x="329.93" y="256.05" width="2.01" height="2.01"/>
<rect x="329.93" y="257.96" width="2.01" height="2.01"/>
<rect x="329.93" y="259.88" width="2.01" height="2.01"/>
<rect x="329.93" y="261.79" width="2.01" height="2.01"/>
<rect x="329.93" y="265.62" width="2.01" height="2.01"/>
<rect x="329.93" y="267.53" width="2.01" height="2.01"/>
<rect x="329.93" y="271.36" width="2.01" height="2.01"/>
<rect x="329.93" y="275.19" width="2.01" height="2.01"/>
<rect x="329.93" y="277.10" width="2.01" height="2.01"/>
<rect x="329.93" y="279.01" width="2.01" height="2.01"/>
<rect x="284" y="235" width="11" height="11" fill="#fff"/>
<rect x="285" y="236" width="10" height="10" fill="none" stroke="#000" stroke-width="1.6"/>
<rect x="288" y="239" width="4" height="4"/>
<rect x="320" y="235" width="11" height="11" fill="#fff"/>
<rect x="321" y="236" width="10" height="10" fill="none" stroke="#000" stroke-width="1.6"/>
<rect x="324" y="239" width="4" height="4"/>
<rect x="284" y="271" width="11" height="11" fill="#fff"/>
<rect x="285" y="272" width="10" height="10" fill="none" stroke="#000" stroke-width="1.6"/>
<rect x="288" y="275" width="4" height="4"/></g>
  <rect x="276" y="290" width="58" height="3" fill="#d8e0e8" opacity="0.6"/>
  
</symbol>
</svg><div id="cards">
<div class="card" style="left:180px"><svg width="394" height="413"><use href="#im1" width="394" height="413"/></svg><div class="ov"></div></div>
<div class="card" style="left:594px;width:395px"><svg width="395" height="413"><use href="#im2" width="395" height="413"/></svg><div class="ov"></div></div>
<div class="card" style="left:1009px"><svg width="394" height="413"><use href="#im3" width="394" height="413"/></svg><div class="ov"></div></div>
<div class="card" style="left:1423px;width:334px;border-radius:6px 0 0 6px"><svg width="334" height="413"><use href="#im4" width="334" height="413"/></svg><div class="ov"></div></div>
</div>
<div class="kebab" style="left:538px;top:659.9px"><i></i><i></i><i></i></div>
<div class="kebab" style="left:952px;top:648.4px"><i></i><i></i><i></i></div>
<div class="kebab" style="left:1366px;top:659.9px"><i></i><i></i><i></i></div>

<svg class="abs" style="left:895px;top:725px" width="150" height="40">
  <path d="M16 11 L9 18 L16 25" fill="none" stroke="#d0d0d0" stroke-width="1.5" stroke-linecap="round" stroke-linejoin="round"/>
  <rect x="43.6" y="3.1" width="60.1" height="30.5" rx="11" fill="#212121"/>
  <rect x="48.8" y="13" width="20.2" height="10.8" rx="5.4" fill="#fff"/>
  <circle cx="88.9" cy="18.3" r="5.1" fill="#bdbdbd"/>
  <path d="M131 11 L138 18 L131 25" fill="none" stroke="#d0d0d0" stroke-width="1.5" stroke-linecap="round" stroke-linejoin="round"/>
</svg>
<div class="abs" style="left:180px;top:800px;width:1592px;height:2px;background:#3e3e3e"></div>
<div class="abs" style="left:180px;top:839px;width:1592px;height:40px;border-radius:4px;background:#3e3e3e"></div>
<svg class="abs" style="left:190px;top:846px" width="26" height="26"><circle cx="11.6" cy="11.2" r="6.3" fill="none" stroke="#c8c8c8" stroke-width="1.4"/><path d="M16.2 15.8 L21.6 21.3" stroke="#c8c8c8" stroke-width="1.4" stroke-linecap="round"/></svg>
<div class="abs" style="left:180px;top:953px;width:61px;height:41px;border-radius:5px;background:#fff"></div>
<div id="grid">
<div class="gcard" style="left:180px"><svg width="306" height="70"><use href="#im1" width="394" height="413" transform="translate(-44 -6)"/></svg></div>
<div class="gcard" style="left:501px;width:307px;background:#060709"></div>
<div class="gcard" style="left:823px"><svg width="306" height="70"><use href="#im3" width="394" height="413" transform="translate(-44 0)"/></svg></div>
<div class="gcard" style="left:1144px;width:307px;background:#1e242d"><div style="position:absolute;left:93px;top:50px;width:80px;height:40px;border-radius:50%;background:radial-gradient(closest-side,rgba(40,70,160,0.7),rgba(40,70,160,0))"></div></div>
<div class="gcard" style="left:1466px;background:#fff"><svg width="306" height="70">
  <path d="M56 54 V19" stroke="#30c040" stroke-width="1"/><path d="M53 22 L56 15 L59 22 Z" fill="#30c040"/>
  <path d="M56 54 H84" stroke="#f08080" stroke-width="1"/><path d="M82 51 L89 54 L82 57 Z" fill="#e02020"/>
  <path d="M56 54 L46 44" stroke="#8080e0" stroke-width="1"/><circle cx="46" cy="44" r="2.5" fill="#2020d0"/>
  <ellipse cx="152" cy="31" rx="11" ry="4.5" fill="#a0a0a0"/>
  <rect x="148" y="34" width="7" height="36" fill="#d8b040"/><rect x="160" y="35" width="7" height="35" fill="#d8b040"/>
  <rect x="153" y="44" width="6" height="26" fill="#b8b8b8"/>
</svg></div>
</div>


<svg class="abs" style="left:1900px;top:0" width="19" height="1076">
  <path d="M9.6 8.4 L13.5 2.4 L17.4 8.4 Z" fill="#a0a0a0" stroke="#a0a0a0" stroke-width="0.6" stroke-linejoin="round"/>
  <rect x="10" y="13.4" width="7" height="564" rx="3.5" fill="#a0a0a0"/>
  <path d="M9.6 1067.6 L13.5 1073.6 L17.4 1067.6 Z" fill="#a0a0a0" stroke="#a0a0a0" stroke-width="0.6" stroke-linejoin="round"/>
</svg>
<div id="t_comm" class="tx" style="left:179.45px;top:33.08px;font-size:31.622px;font-weight:bold;color:#fff;transform:scaleX(0.9549)">Community</div>
<div id="t_disc" class="tx" style="left:178.04px;top:92.43px;font-size:22.840px;font-weight:normal;color:#fff;transform:scaleX(0.9820)">Discover community Verses and Activations.</div>
<div id="t_act" class="tx" style="left:182.00px;top:177.40px;font-size:18.892px;font-weight:normal;color:#d9d9d9;transform:scaleX(0.9297)">Activations</div>
<div id="t_ver" class="tx" style="left:297.80px;top:177.40px;font-size:18.892px;font-weight:bold;color:#fff;transform:scaleX(0.8500)">Verses</div>
<div id="t_arc" class="tx" style="left:379.40px;top:177.40px;font-size:18.892px;font-weight:normal;color:#d9d9d9;transform:scaleX(0.9339)">Archive</div>
<div id="t_tmp" class="tx" style="left:468.50px;top:177.40px;font-size:18.892px;font-weight:normal;color:#d9d9d9;transform:scaleX(0.9151)">Templates</div>
<div id="t_new" class="tx" style="left:212.16px;top:254.85px;font-size:26.352px;font-weight:bold;color:#fff;transform:scaleX(0.9712)">New</div>
<div id="c1t" class="tx" style="left:194.90px;top:647.34px;font-size:18.187px;font-weight:bold;color:#fff;transform:scaleX(0.8997)">ATTENDANT ENGAGEMENTS No. 1</div>
<div id="c2t1" class="tx" style="left:608.47px;top:622.34px;font-size:18.187px;font-weight:bold;color:#fff;transform:scaleX(0.9303)">Media Under Dystopia Wisper Edition:</div>
<div id="c2t2" class="tx" style="left:609.40px;top:647.34px;font-size:18.187px;font-weight:bold;color:#fff;transform:scaleX(0.9158)">A Public XR Metaverse</div>
<div id="c3t" class="tx" style="left:1023.60px;top:647.34px;font-size:18.187px;font-weight:bold;color:#fff;transform:scaleX(0.8835)">Vuk Cosic: Starstruck</div>
<div id="c4t" class="tx" style="left:1437.60px;top:647.34px;font-size:18.187px;font-weight:bold;color:#fff;transform:scaleX(0.9339)">Antonio Mendez: Dragvatar Metaverse</div>
<div id="c1s" class="tx" style="left:194.02px;top:672.04px;font-size:18.187px;font-weight:normal;color:#fff;transform:scaleX(0.9802)">Support Team</div>
<div id="c2s" class="tx" style="left:608.42px;top:672.04px;font-size:18.187px;font-weight:normal;color:#fff;transform:scaleX(0.9802)">Support Team</div>
<div id="c3s" class="tx" style="left:1022.62px;top:672.04px;font-size:18.187px;font-weight:normal;color:#fff;transform:scaleX(0.9802)">Support Team</div>
<div id="c4s" class="tx" style="left:1436.62px;top:672.04px;font-size:18.187px;font-weight:normal;color:#fff;transform:scaleX(0.9802)">Support Team</div>
<div id="t_srch" class="tx" style="left:223.13px;top:849.76px;font-size:18.610px;font-weight:normal;color:#a6a6a6;transform:scaleX(0.8694)">Search...</div>
<div id="t_tot" class="tx" style="left:1714.40px;top:906.19px;font-size:19.456px;font-weight:bold;color:#fff;transform:scaleX(0.8761)">Total: 6</div>
<div id="t_all" class="tx" style="left:196.20px;top:964.89px;font-size:18.469px;font-weight:normal;color:#111;transform:scaleX(0.9250)">ALL</div>
</body></html>
